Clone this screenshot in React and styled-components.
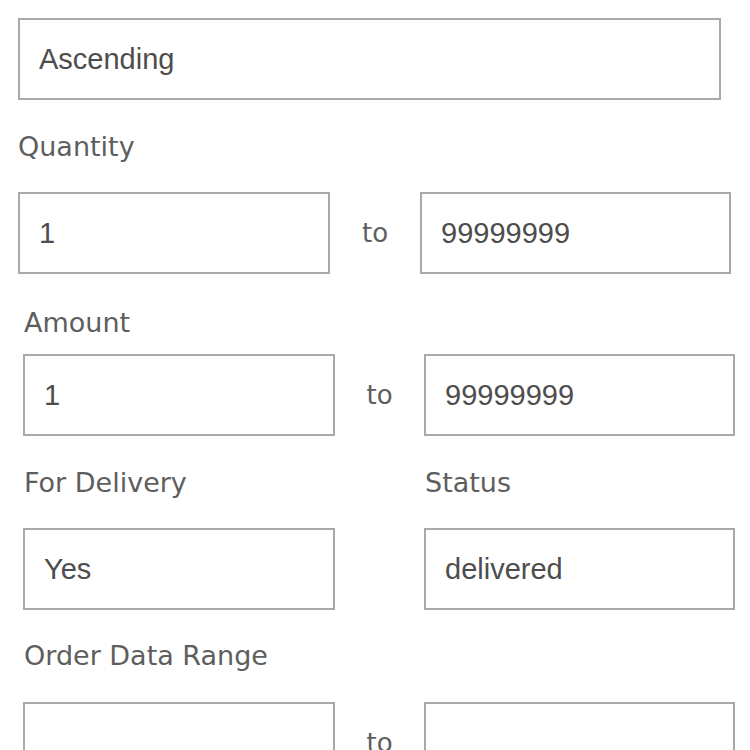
import styled, { createGlobalStyle } from 'styled-components';

const GlobalStyle = createGlobalStyle`
  body {
    margin: 0;
    background: #ffffff;
  }
`;

const fields = {
  quantity: { from: '1', to: '99999999' },
  amount: { from: '1', to: '99999999' },
};

function App() {
  return (
    <Page>
      <GlobalStyle />
      <Block $left={18}>
        <Field $width={703}>
          <TextBox readOnly defaultValue="Ascending" />
        </Field>
        <Label $top={32} $bottom={30}>
          Quantity
        </Label>
        <RangeRow $mid={90}>
          <TextBox readOnly defaultValue={fields.quantity.from} />
          <To>to</To>
          <TextBox readOnly defaultValue={fields.quantity.to} />
        </RangeRow>
      </Block>

      <Block $left={23}>
        <Label $top={34} $bottom={16} $indent={1}>
          Amount
        </Label>
        <RangeRow $mid={89}>
          <TextBox readOnly defaultValue={fields.amount.from} />
          <To>to</To>
          <TextBox readOnly defaultValue={fields.amount.to} />
        </RangeRow>

        <RangeRow $mid={89}>
          <Label $top={32} $bottom={30} $indent={1}>
            For Delivery
          </Label>
          <span />
          <Label $top={32} $bottom={30} $indent={1}>
            Status
          </Label>
          <TextBox readOnly defaultValue="Yes" />
          <span />
          <TextBox readOnly defaultValue="delivered" />
        </RangeRow>

        <Label $top={31} $bottom={31} $indent={1}>
          Order Data Range
        </Label>
        <RangeRow $mid={89}>
          <TextBox readOnly defaultValue="" />
          <To>to</To>
          <TextBox readOnly defaultValue="" />
        </RangeRow>
      </Block>
    </Page>
  );
}

const Page = styled.div`
  width: 750px;
  height: 750px;
  overflow: hidden;
  padding-top: 18px;
  box-sizing: border-box;
`;

const Block = styled.div`
  display: flex;
  flex-direction: column;
  padding-left: ${(p) => p.$left}px;
`;

const Field = styled.div`
  display: flex;
  width: ${(p) => p.$width}px;
`;

const Label = styled.div`
  font-family: 'DejaVu Sans', sans-serif;
  font-size: 27px;
  line-height: 30px;
  color: #5e5e5e;
  margin-top: ${(p) => p.$top}px;
  margin-bottom: ${(p) => p.$bottom}px;
  padding-left: ${(p) => p.$indent || 0}px;
`;

const TextBox = styled.input`
  width: 100%;
  height: 82px;
  box-sizing: border-box;
  border: 2px solid #a9a9a9;
  border-radius: 0;
  background: #ffffff;
  padding: 0 19px;
  margin: 0;
  font-family: 'Liberation Sans', Arial, sans-serif;
  font-size: 29px;
  color: #4d4d4d;
  outline: none;
`;

const RangeRow = styled.div`
  display: grid;
  grid-template-columns: 312px ${(p) => p.$mid}px 311px;
  align-items: center;
`;

const To = styled.span`
  font-family: 'DejaVu Sans', sans-serif;
  font-size: 26px;
  color: #5e5e5e;
  text-align: center;
`;

export default App;
